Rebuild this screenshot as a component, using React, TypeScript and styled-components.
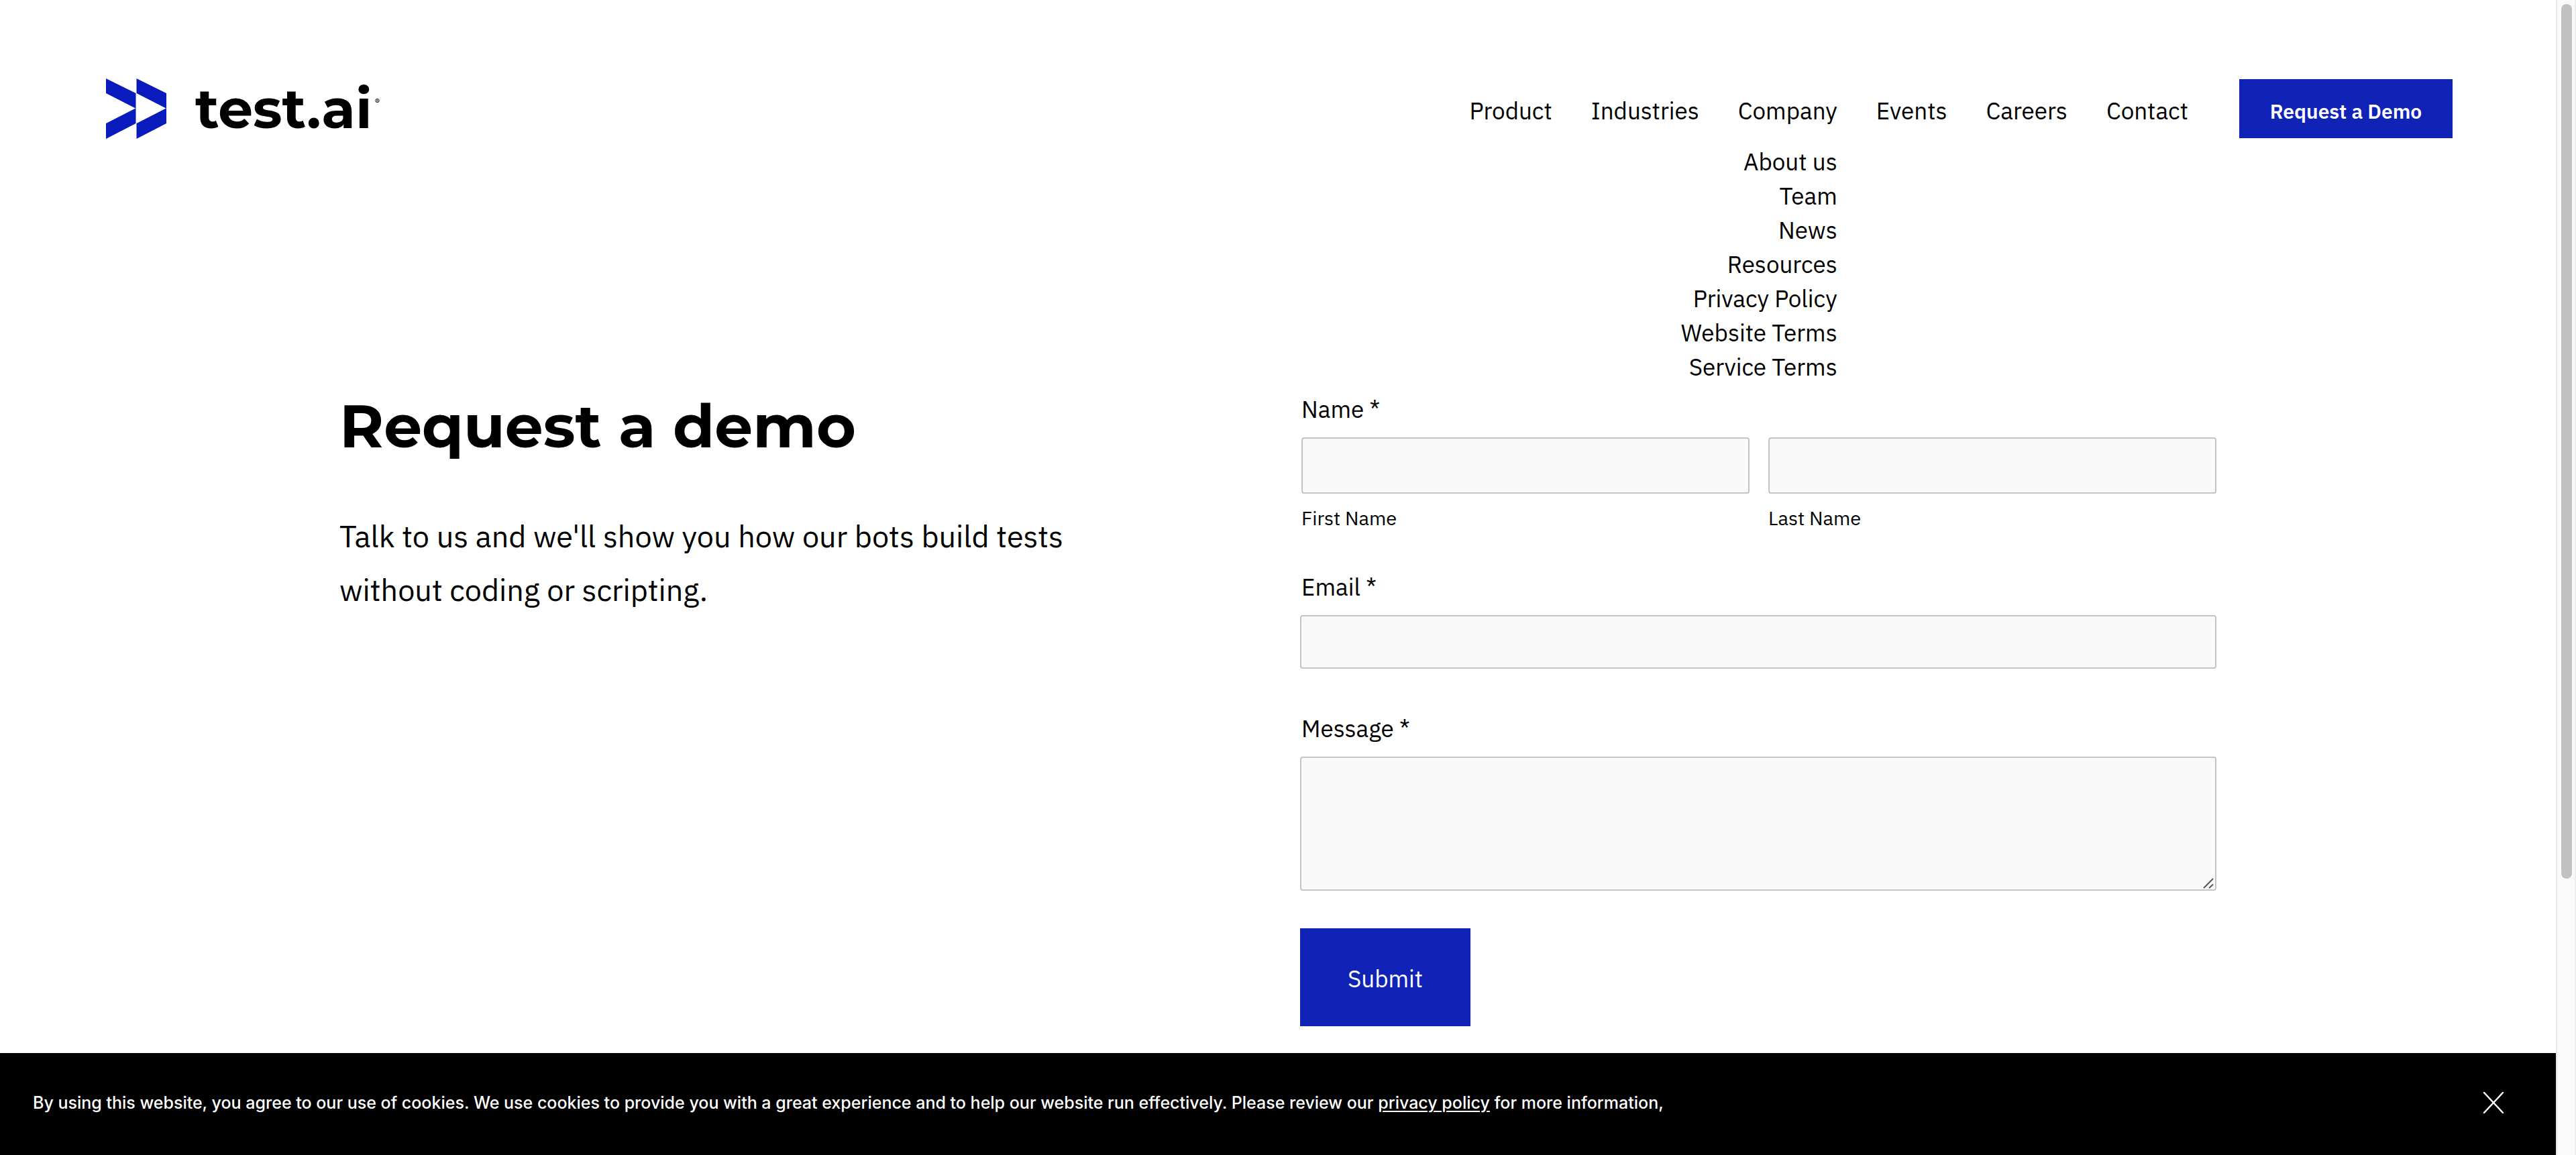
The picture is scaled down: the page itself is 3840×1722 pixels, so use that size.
import React, { useState } from "react";
import styled, { createGlobalStyle } from "styled-components";

const blue = "#1023b6";
const bodyFont = `"IBM Plex Sans", Roboto, sans-serif`;

const GlobalStyle = createGlobalStyle`
  *, *::before, *::after { box-sizing: border-box; }
  body {
    margin: 0;
    background: #fff;
    color: #000;
    font-family: ${bodyFont};
    font-size: 35px;
    line-height: 51px;
  }
`;

const Shell = styled.div`
  display: grid;
  grid-template-columns: minmax(0, 1fr) 30px;
  min-height: 100vh;
`;

const Page = styled.div`
  display: flex;
  flex-direction: column;
`;

const Header = styled.header`
  display: flex;
  align-items: center;
  justify-content: space-between;
  padding: 117px 154px 117px 158px;
`;

const Logo = styled.a`
  display: flex;
  align-items: center;
  color: #000;
  text-decoration: none;
`;

const LogoMark = styled.svg`
  width: 90px;
  height: 90px;
  margin-right: 43px;
`;

const Wordmark = styled.span`
  font: 700 82px/90px Montserrat, Inter, sans-serif;
`;

const Registered = styled.span`
  align-self: flex-start;
  padding-top: 28px;
  margin-left: 4px;
  font: 400 11px/12px Inter, sans-serif;
`;

const HeaderRight = styled.div`
  display: flex;
  align-items: center;
  gap: 76px;
`;

const NavList = styled.ul`
  display: flex;
  gap: 58px;
  margin: 0;
  padding: 6px 0 0;
  list-style: none;
`;

const NavItem = styled.li`
  position: relative;
`;

const NavLink = styled.a`
  color: inherit;
  text-decoration: none;
  white-space: nowrap;
`;

const SubMenu = styled.ul`
  position: absolute;
  top: 100%;
  right: 0;
  margin: 0;
  padding: 25px 0 0;
  list-style: none;
  text-align: right;
`;

const DemoLink = styled.a`
  display: flex;
  align-items: center;
  justify-content: center;
  width: 318px;
  height: 88px;
  padding-top: 6px;
  background: ${blue};
  color: #fff;
  font-size: 30px;
  font-weight: 600;
  text-decoration: none;
`;

const Main = styled.main`
  flex: 1;
  display: grid;
  grid-template-columns: 1fr 1fr;
  gap: 66px;
  align-items: start;
  padding: 261px 506px 38px;
`;

const Title = styled.h1`
  margin: 0 0 74px;
  font: 700 90px/100px Montserrat, "Open Sans", sans-serif;
`;

const Lead = styled.p`
  max-width: 1120px;
  margin: 0;
  font-size: 45px;
  line-height: 80px;
`;

const Form = styled.form`
  display: flex;
  flex-direction: column;
  gap: 64px;
`;

const Field = styled.div`
  display: flex;
  flex-direction: column;
  gap: 16px;
`;

const Label = styled.label`
  padding-left: 2px;
`;

const NameField = styled.fieldset`
  min-width: 0;
  margin: 0;
  padding: 0 0 0 2px;
  border: 0;
`;

const Legend = styled.legend`
  padding: 0;
  margin-bottom: 16px;
`;

const NameRow = styled.div`
  display: grid;
  grid-template-columns: 1fr 1fr;
  gap: 28px;
`;

const NamePart = styled.div`
  display: flex;
  flex-direction: column;
  gap: 22px;
`;

const Caption = styled.label`
  font-size: 29px;
  line-height: 28px;
`;

const control = `
  display: block;
  width: 100%;
  margin: 0;
  padding: 0 24px;
  border: 2px solid #c4c4c4;
  border-radius: 4px;
  background: #f9f9f9;
  font: inherit;
  outline: none;
`;

const TextInput = styled.input<{ $tall?: boolean }>`
  ${control}
  height: ${(p) => (p.$tall ? 84 : 80)}px;
`;

const AreaWrap = styled.div`
  position: relative;
`;

const TextArea = styled.textarea`
  ${control}
  height: 200px;
  padding: 20px 24px;
  resize: none;
`;

const Grip = styled.svg`
  position: absolute;
  right: 4px;
  bottom: 3px;
  width: 16px;
  height: 16px;
  pointer-events: none;
`;

const Submit = styled.button`
  align-self: flex-start;
  width: 254px;
  height: 146px;
  margin-top: -8px;
  padding: 4px 0 0;
  border: 0;
  background: ${blue};
  color: #fff;
  font: 400 35px/51px ${bodyFont};
`;

const Banner = styled.aside`
  display: flex;
  align-items: center;
  justify-content: space-between;
  min-height: 152px;
  padding: 0 77px 4px 49px;
  background: #000;
  color: #fff;
  font: 500 25px/40px Inter, sans-serif;
`;

const BannerText = styled.p`
  margin: 0;
`;

const BannerLink = styled.a`
  color: inherit;
  text-decoration: underline;
  text-decoration-thickness: 2px;
  text-underline-offset: 3px;
`;

const Close = styled.button`
  display: flex;
  padding: 0;
  border: 0;
  background: none;
`;

const ScrollTrack = styled.div`
  padding: 6px 4px 0 6px;
  border-left: 2px solid #e7e7e7;
  border-right: 2px solid #ededed;
  background: #fafafa;
`;

const ScrollThumb = styled.div`
  width: 16px;
  height: 76%;
  border-radius: 8px;
  background: #c1c1c1;
`;

const navItems = ["Product", "Industries", "Company", "Events", "Careers", "Contact"];
const companyItems = [
  "About us",
  "Team",
  "News",
  "Resources",
  "Privacy Policy",
  "Website Terms",
  "Service Terms",
];

export default function App() {
  const [bannerOpen, setBannerOpen] = useState(true);
  return (
    <Shell>
      <GlobalStyle />
      <Page>
        <Header>
          <Logo href="#">
            <LogoMark viewBox="0 0 90 90" aria-hidden="true">
              <path
                fill="#0a1bbd"
                d="M0 0 44.500 22V67L0 90V67L44 44.500 0 22ZM45.500 0 90 22V67L45.500 90V67L89.500 44.500 45.500 22Z"
              />
            </LogoMark>
            <Wordmark>test.ai</Wordmark>
            <Registered>®</Registered>
          </Logo>
          <HeaderRight>
            <nav>
              <NavList>
                {navItems.map((item) => (
                  <NavItem key={item}>
                    <NavLink href="#">{item}</NavLink>
                    {item === "Company" && (
                      <SubMenu>
                        {companyItems.map((sub) => (
                          <li key={sub}>
                            <NavLink href="#">{sub}</NavLink>
                          </li>
                        ))}
                      </SubMenu>
                    )}
                  </NavItem>
                ))}
              </NavList>
            </nav>
            <DemoLink href="#">Request a Demo</DemoLink>
          </HeaderRight>
        </Header>

        <Main>
          <section>
            <Title>Request a demo</Title>
            <Lead>Talk to us and we'll show you how our bots build tests without coding or scripting.</Lead>
          </section>
          <Form onSubmit={(e) => e.preventDefault()}>
            <NameField>
              <Legend>Name *</Legend>
              <NameRow>
                <NamePart>
                  <TextInput id="first" type="text" $tall />
                  <Caption htmlFor="first">First Name</Caption>
                </NamePart>
                <NamePart>
                  <TextInput id="last" type="text" $tall />
                  <Caption htmlFor="last">Last Name</Caption>
                </NamePart>
              </NameRow>
            </NameField>
            <Field>
              <Label htmlFor="email">Email *</Label>
              <TextInput id="email" type="email" />
            </Field>
            <Field>
              <Label htmlFor="message">Message *</Label>
              <AreaWrap>
                <TextArea id="message" />
                <Grip viewBox="0 0 16 16" aria-hidden="true">
                  <path d="M1 15 15 1M9 15 15 9.500" stroke="#555" strokeWidth="2" fill="none" />
                </Grip>
              </AreaWrap>
            </Field>
            <Submit type="submit">Submit</Submit>
          </Form>
        </Main>

        {bannerOpen && (
          <Banner>
            <BannerText>
              By using this website, you agree to our use of cookies. We use cookies to provide you with a great
              experience and to help our website run effectively. Please review our{" "}
              <BannerLink href="#">privacy policy</BannerLink> for more information,
            </BannerText>
            <Close type="button" aria-label="Close" onClick={() => setBannerOpen(false)}>
              <svg width="32" height="32" viewBox="0 0 32 32" aria-hidden="true">
                <path d="M2 1 30 31M30 1 2 31" stroke="#fff" strokeWidth="2.500" strokeLinecap="round" />
              </svg>
            </Close>
          </Banner>
        )}
      </Page>
      <ScrollTrack aria-hidden="true">
        <ScrollThumb />
      </ScrollTrack>
    </Shell>
  );
}
